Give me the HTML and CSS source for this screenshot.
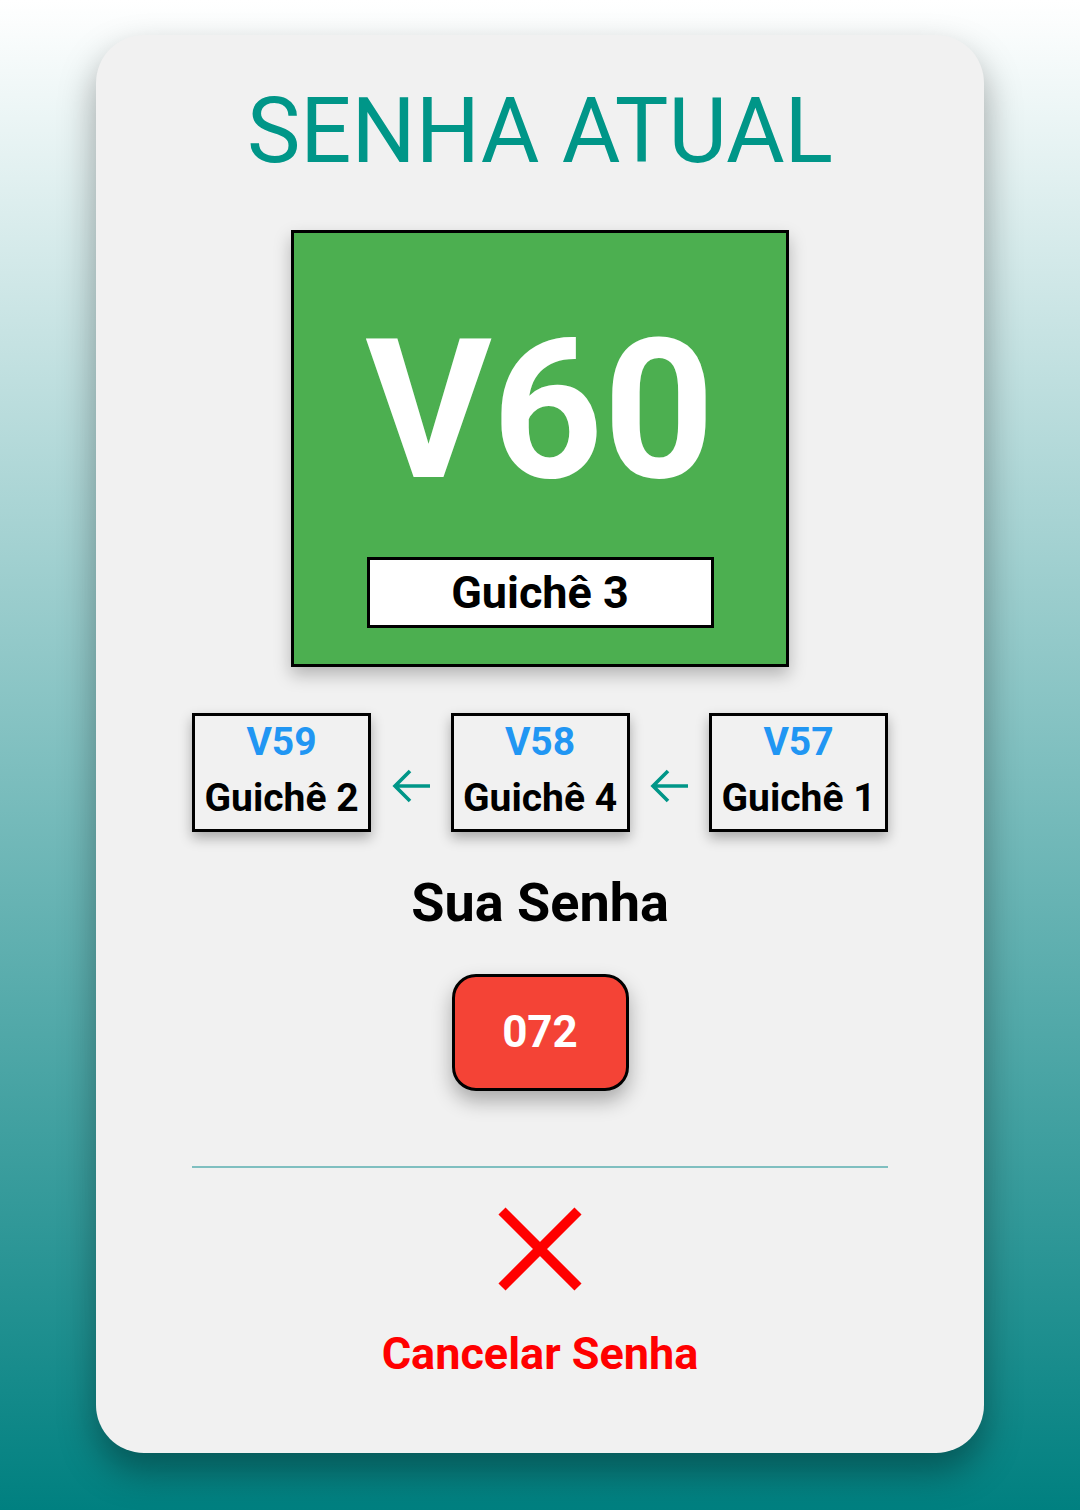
FILE: index.html
```html
<!DOCTYPE html>
<html lang="pt">
<head>
<meta charset="utf-8">
<title>Senha Atual</title>
<link rel="stylesheet" href="styles.css">
</head>
<body>
<main class="card">
  <h1 class="title">SENHA ATUAL</h1>
  <section class="current">
    <div class="current-code">V60</div>
    <div class="current-desk">Guichê 3</div>
  </section>
  <section class="history">
    <div class="hist-item">
      <div class="hist-code">V59</div>
      <div class="hist-desk">Guichê 2</div>
    </div>
    <svg class="arrow" viewBox="0 0 38 38" width="38" height="38"><path d="M38 19H3M18 4L3 19l15 15" fill="none" stroke="#009688" stroke-width="3.6"/></svg>
    <div class="hist-item">
      <div class="hist-code">V58</div>
      <div class="hist-desk">Guichê 4</div>
    </div>
    <svg class="arrow" viewBox="0 0 38 38" width="38" height="38"><path d="M38 19H3M18 4L3 19l15 15" fill="none" stroke="#009688" stroke-width="3.6"/></svg>
    <div class="hist-item">
      <div class="hist-code">V57</div>
      <div class="hist-desk">Guichê 1</div>
    </div>
  </section>
  <h2 class="your-label">Sua Senha</h2>
  <div class="your-code">072</div>
  <hr class="divider">
  <button class="cancel" type="button">
    <svg class="cancel-icon" viewBox="0 0 84 84" width="84" height="84"><path d="M4 4L80 80M80 4L4 80" fill="none" stroke="#ff0000" stroke-width="10"/></svg>
    <span class="cancel-text">Cancelar Senha</span>
  </button>
</main>
</body>
</html>
```

FILE: styles.css
```css
html, body {
  margin: 0;
  padding: 0;
}
body {
  min-height: 1510px;
  background: linear-gradient(to bottom, #ffffff 0%, #008080 100%);
  font-family: Roboto, "Liberation Sans", sans-serif;
  padding-top: 35px;
  box-sizing: border-box;
}
.card {
  width: 888px;
  height: 1418px;
  margin: 0 auto;
  box-sizing: border-box;
  background: #f1f1f1;
  border-radius: 48px;
  padding: 44px 96px 0;
  box-shadow: 0 18px 36px rgba(0, 0, 0, 0.35);
  display: flex;
  flex-direction: column;
  align-items: center;
}
.title {
  margin: 0;
  font-size: 90px;
  font-weight: 400;
  line-height: 105px;
  color: #009688;
  letter-spacing: 0;
}
.current {
  margin-top: 46px;
  width: 498px;
  height: 437px;
  box-sizing: border-box;
  border: 3px solid #000;
  background: #4caf50;
  display: flex;
  flex-direction: column;
  align-items: center;
  padding-top: 64px;
  box-shadow: 0 8px 16px rgba(0, 0, 0, 0.25);
}
.current-code {
  font-size: 194px;
  font-weight: 700;
  line-height: 227px;
  color: #fff;
}
.current-desk {
  margin-top: 33px;
  width: 347px;
  height: 71px;
  box-sizing: border-box;
  border: 3px solid #000;
  background: #fff;
  font-size: 45px;
  font-weight: 700;
  line-height: 65px;
  text-align: center;
  color: #000;
}
.history {
  margin-top: 46px;
  width: 100%;
  display: flex;
  justify-content: space-between;
  align-items: center;
}
.hist-item {
  width: 179px;
  height: 119px;
  box-sizing: border-box;
  border: 3px solid #000;
  background: #f1f1f1;
  display: flex;
  flex-direction: column;
  align-items: center;
  box-shadow: 0 6px 12px rgba(0, 0, 0, 0.3);
}
.hist-code {
  margin-top: 3px;
  font-size: 39px;
  font-weight: 700;
  line-height: 46px;
  color: #2196f3;
}
.hist-desk {
  margin-top: 10px;
  font-size: 39px;
  font-weight: 700;
  line-height: 46px;
  color: #000;
}
.arrow {
  display: block;
  margin-top: 26px;
}
.your-label {
  margin: 39px 0 0;
  font-size: 54px;
  font-weight: 700;
  line-height: 63px;
  color: #000;
}
.your-code {
  margin-top: 40px;
  width: 177px;
  height: 117px;
  box-sizing: border-box;
  border: 3px solid #000;
  border-radius: 24px;
  background: #f44336;
  color: #fff;
  font-size: 44px;
  font-weight: 700;
  line-height: 111px;
  text-align: center;
  box-shadow: 0 10px 20px rgba(0, 0, 0, 0.3);
}
.divider {
  margin: 75px 0 0;
  width: 100%;
  height: 2px;
  border: 0;
  background: #7fbfc0;
}
.cancel {
  margin-top: 39px;
  padding: 0;
  border: 0;
  background: none;
  display: flex;
  flex-direction: column;
  align-items: center;
  font-family: inherit;
  cursor: pointer;
}
.cancel-icon {
  display: block;
}
.cancel-text {
  margin-top: 36px;
  font-size: 45px;
  font-weight: 700;
  line-height: 53px;
  color: #ff0000;
}
```
